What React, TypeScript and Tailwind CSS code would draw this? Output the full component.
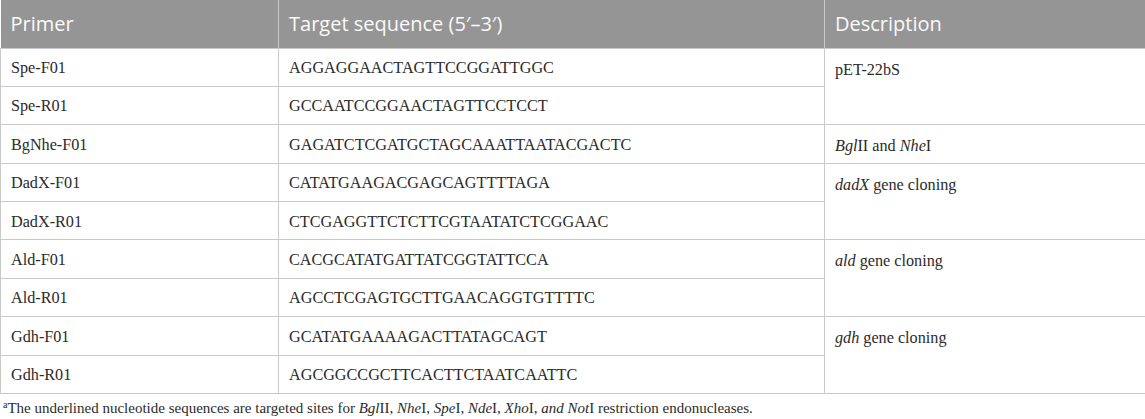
/*
 * PrimerTable - primer list with target sequences
 */

const serif = { fontFamily: "'Liberation Serif', 'Times New Roman', serif" };

type Row = {
  primer: string;
  seq: string;
  desc?: React.ReactNode;
  span?: number;
};

const rows: Row[] = [
  { primer: "Spe-F01", seq: "AGGAGGAACTAGTTCCGGATTGGC", desc: "pET-22bS", span: 2 },
  { primer: "Spe-R01", seq: "GCCAATCCGGAACTAGTTCCTCCT" },
  {
    primer: "BgNhe-F01",
    seq: "GAGATCTCGATGCTAGCAAATTAATACGACTC",
    desc: (
      <>
        <i>Bgl</i>II and <i>Nhe</i>I
      </>
    ),
    span: 1,
  },
  {
    primer: "DadX-F01",
    seq: "CATATGAAGACGAGCAGTTTTAGA",
    desc: (
      <>
        <i>dadX</i> gene cloning
      </>
    ),
    span: 2,
  },
  { primer: "DadX-R01", seq: "CTCGAGGTTCTCTTCGTAATATCTCGGAAC" },
  {
    primer: "Ald-F01",
    seq: "CACGCATATGATTATCGGTATTCCA",
    desc: (
      <>
        <i>ald</i> gene cloning
      </>
    ),
    span: 2,
  },
  { primer: "Ald-R01", seq: "AGCCTCGAGTGCTTGAACAGGTGTTTTC" },
  {
    primer: "Gdh-F01",
    seq: "GCATATGAAAAGACTTATAGCAGT",
    desc: (
      <>
        <i>gdh</i> gene cloning
      </>
    ),
    span: 2,
  },
  { primer: "Gdh-R01", seq: "AGCGGCCGCTTCACTTCTAATCAATTC" },
];

export default function App() {
  return (
    <div className="w-[1145px] h-[419px] bg-white overflow-hidden">
      <table className="w-[1145px] border-collapse table-fixed text-[#2b2b2b]">
        <colgroup>
          <col className="w-[278px]" />
          <col className="w-[546px]" />
          <col className="w-[321px]" />
        </colgroup>
        <thead>
          <tr
            className="h-[48px] bg-[#959595] text-[#fafafa] text-[20px] text-left"
            style={{ fontFamily: "'Open Sans', sans-serif" }}
          >
            <th className="font-normal px-[10px] border-r border-[#c9c9c9]">Primer</th>
            <th className="font-normal px-[10px] border-r border-[#c9c9c9]">
              Target sequence (5′–3′)
            </th>
            <th className="font-normal px-[10px]">Description</th>
          </tr>
        </thead>
        <tbody className="text-[16.2px]" style={serif}>
          {rows.map((r) => (
            <tr key={r.primer} className="h-[38.4px]">
              <td className="px-[10px] pt-[2px] border border-[#c9c9c9]">{r.primer}</td>
              <td className="px-[10px] pt-[2px] border border-[#c9c9c9]">{r.seq}</td>
              {r.span && (
                <td
                  rowSpan={r.span}
                  className="px-[10px] pt-[9px] align-top border border-[#c9c9c9]"
                >
                  {r.desc}
                </td>
              )}
            </tr>
          ))}
        </tbody>
      </table>
      <p className="mt-[5px] pl-[3px] text-[15px] leading-[18px] text-[#2b2b2b]" style={serif}>
        <sup className="text-[10px]">a</sup>The underlined nucleotide sequences are targeted
        sites for <i>Bgl</i>II, <i>Nhe</i>I, <i>Spe</i>I, <i>Nde</i>I, <i>Xho</i>I,{" "}
        <i>and Not</i>I restriction endonucleases.
      </p>
    </div>
  );
}
